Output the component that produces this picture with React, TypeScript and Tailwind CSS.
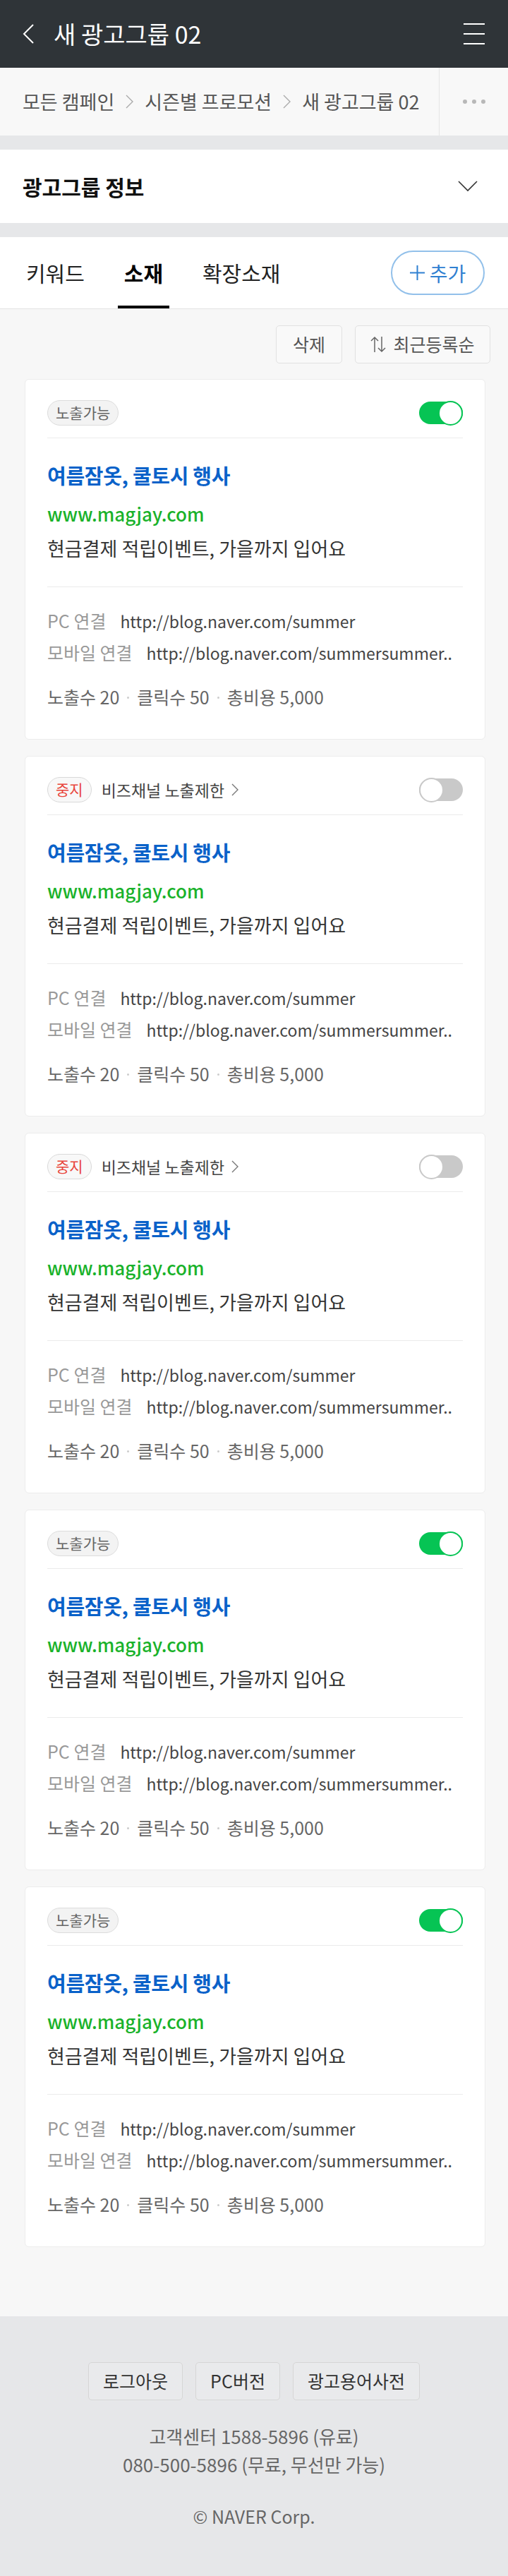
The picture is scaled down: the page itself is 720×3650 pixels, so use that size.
import React from "react";

type Ad = {
  status: "on" | "stop";
};

const ads: Ad[] = [
  { status: "on" },
  { status: "stop" },
  { status: "stop" },
  { status: "on" },
  { status: "on" },
];

function Toggle({ on }: { on: boolean }) {
  if (on) {
    return (
      <div className="flex h-[32px] w-[62px] items-center justify-end rounded-full bg-[#06c454]">
        <div className="h-[35px] w-[35px] rounded-full border-2 border-[#06c454] bg-white" />
      </div>
    );
  }
  return (
    <div className="flex h-[32px] w-[62px] items-center justify-start rounded-full bg-[#c9c9c9]">
      <div className="h-[35px] w-[35px] rounded-full border-2 border-[#c9c9c9] bg-white" />
    </div>
  );
}

function AdCard({ ad }: { ad: Ad }) {
  return (
    <div className="rounded-[6px] border border-[#ececec] bg-white px-[31px] pt-[29px] pb-[41px]">
      <div className="flex h-[36px] items-center justify-between">
        {ad.status === "on" ? (
          <span className="flex h-[36px] items-center rounded-full border border-[#dcdcdc] bg-[#f3f3f3] px-[11px] text-[21px] text-[#666]">
            노출가능
          </span>
        ) : (
          <div className="flex items-center">
            <span className="flex h-[36px] items-center rounded-full border border-[#d9d9d9] bg-[#f8f8f8] px-[11px] text-[21px] text-[#e8453c]">
              중지
            </span>
            <span className="ml-[14px] text-[23px] text-[#444]">비즈채널 노출제한</span>
            <svg width="10" height="18" viewBox="0 0 10 18" className="ml-[10px]" fill="none" stroke="#777" strokeWidth="1.4">
              <path d="M1 1l8 8-8 8" />
            </svg>
          </div>
        )}
        <Toggle on={ad.status === "on"} />
      </div>
      <div className="mt-[17px] border-t border-[#ebebeb]" />
      <div className="mt-[35px] flex h-[36px] items-center text-[29px] font-bold tracking-[-0.3px] text-[#0a62c9]">
        여름잠옷, 쿨토시 행사
      </div>
      <div className="mt-[17px] flex h-[36px] items-center text-[26px] font-medium text-[#19b22a]">
        www.magjay.com
      </div>
      <div className="mt-[14px] flex h-[36px] items-center text-[27px] text-[#333]">
        현금결제 적립이벤트, 가을까지 입어요
      </div>
      <div className="mt-[36px] border-t border-[#ebebeb]" />
      <div className="mt-[30px] flex h-[36px] items-center">
        <span className="text-[25px] text-[#999]">PC 연결</span>
        <span className="ml-[20px] text-[23px] text-[#444]">http://blog.naver.com/summer</span>
      </div>
      <div className="mt-[9px] flex h-[36px] items-center">
        <span className="shrink-0 text-[25px] text-[#999]">모바일 연결</span>
        <span className="ml-[20px] text-[23px] text-[#444]">http://blog.naver.com/summersummer..</span>
      </div>
      <div className="mt-[27px] flex h-[36px] items-center text-[25px] text-[#666]">
        <span>노출수 20</span>
        <span className="mx-[11px] h-[3px] w-[3px] rounded-full bg-[#ccc]" />
        <span>클릭수 50</span>
        <span className="mx-[11px] h-[3px] w-[3px] rounded-full bg-[#ccc]" />
        <span>총비용 5,000</span>
      </div>
    </div>
  );
}

function Crumb() {
  return (
    <svg width="11" height="20" viewBox="0 0 11 20" className="mx-[16px] shrink-0" fill="none" stroke="#aaa" strokeWidth="1.4">
      <path d="M1 1l9 9-9 9" />
    </svg>
  );
}

export default function App() {
  return (
    <div className="w-[720px] bg-[#f7f7f7] font-['Noto_Sans_CJK_KR',sans-serif]">
      {/* header */}
      <header className="flex h-[96px] items-center bg-[#2f3438] pl-[32px] pr-[33px]">
        <svg width="16" height="28" viewBox="0 0 16 28" fill="none" stroke="#fff" strokeWidth="2" className="shrink-0">
          <path d="M15 1L2 14l13 13" />
        </svg>
        <span className="ml-[28px] whitespace-nowrap text-[34px] leading-[44px] text-white">새 광고그룹 02</span>
        <div className="ml-auto flex w-[30px] flex-col gap-[12px]">
          <span className="h-[2px] bg-white" />
          <span className="h-[2px] bg-white" />
          <span className="h-[2px] bg-white" />
        </div>
      </header>

      {/* breadcrumb */}
      <nav className="flex h-[96px] items-center bg-[#f8f8f8]">
        <div className="flex flex-1 items-center whitespace-nowrap pl-[32px] text-[27px] text-[#555]">
          <span>모든 캠페인</span>
          <Crumb />
          <span>시즌별 프로모션</span>
          <Crumb />
          <span>새 광고그룹 02</span>
        </div>
        <div className="flex h-full w-[98px] shrink-0 items-center justify-center gap-[7px] border-l border-[#e5e5e5]">
          <span className="h-[6px] w-[6px] rounded-full bg-[#b8b8b8]" />
          <span className="h-[6px] w-[6px] rounded-full bg-[#b8b8b8]" />
          <span className="h-[6px] w-[6px] rounded-full bg-[#b8b8b8]" />
        </div>
      </nav>

      <div className="h-[20px] bg-[#e6e7e9]" />

      {/* ad group info */}
      <section className="flex h-[104px] items-center justify-between bg-white pl-[32px] pr-[43px]">
        <div className="text-[30px] font-bold text-[#111]">광고그룹 정보</div>
        <svg width="28" height="16" viewBox="0 0 28 16" fill="none" stroke="#333" strokeWidth="1.6">
          <path d="M1 1l13 13L27 1" />
        </svg>
      </section>

      <div className="h-[20px] bg-[#e6e7e9]" />

      {/* tabs */}
      <div className="flex h-[102px] items-stretch border-b border-[#e3e3e3] bg-white pl-[28px] pr-[33px]">
        <div className="flex gap-[38px]">
          <button className="flex items-center border-b-[4px] border-transparent px-[9px] pt-[4px] text-[30px] text-[#222]">
            키워드
          </button>
          <button className="flex items-center border-b-[4px] border-black px-[9px] pt-[4px] text-[30px] font-bold text-black">
            소재
          </button>
          <button className="flex items-center border-b-[4px] border-transparent px-[9px] pt-[4px] text-[30px] text-[#222]">
            확장소재
          </button>
        </div>
        <div className="ml-auto flex items-center">
          <button className="flex h-[63px] w-[133px] items-center justify-center gap-[7px] rounded-full border-2 border-[#92c0ea] text-[28px] text-[#2f80d1]">
            <svg width="21" height="21" viewBox="0 0 21 21" fill="none" stroke="#2f80d1" strokeWidth="2">
              <path d="M10.5 0v21M0 10.5h21" />
            </svg>
            추가
          </button>
        </div>
      </div>

      {/* list */}
      <main className="pt-[23px] pb-[98px]">
        <div className="flex justify-end gap-[18px] pr-[25px]">
          <button className="flex h-[54px] w-[94px] items-center justify-center rounded-[5px] border border-[#e1e1e1] bg-[#f9f9f9] text-[25px] text-[#555]">
            삭제
          </button>
          <button className="flex h-[54px] w-[192px] items-center justify-center gap-[10px] rounded-[5px] border border-[#e1e1e1] bg-[#f9f9f9] text-[25px] text-[#555]">
            <svg width="22" height="24" viewBox="0 0 22 24" fill="none" stroke="#666" strokeWidth="1.5">
              <path d="M6 23V2M1 7l5-5 5 5M16 1v21M11 17l5 5 5-5" />
            </svg>
            최근등록순
          </button>
        </div>
        <div className="mt-[22px] flex flex-col gap-[23px] pl-[35px] pr-[32px]">
          {ads.map((ad, i) => (
            <AdCard key={i} ad={ad} />
          ))}
        </div>
      </main>

      {/* footer */}
      <footer className="flex flex-col items-center bg-[#e6e7e9] pt-[65px] pb-[65px] text-[#666]">
        <div className="flex gap-[18px]">
          <button className="flex h-[54px] items-center rounded-[5px] border border-[#d6d6d6] bg-[#e9eaec] px-[20px] text-[25px] text-[#333]">
            로그아웃
          </button>
          <button className="flex h-[54px] items-center rounded-[5px] border border-[#d6d6d6] bg-[#e9eaec] px-[20px] text-[25px] text-[#333]">
            PC버전
          </button>
          <button className="flex h-[54px] items-center rounded-[5px] border border-[#d6d6d6] bg-[#e9eaec] px-[20px] text-[25px] text-[#333]">
            광고용어사전
          </button>
        </div>
        <p className="mt-[31px] text-[26px] leading-[40px]">고객센터 1588-5896 (유료)</p>
        <p className="text-[26px] leading-[40px]">080-500-5896 (무료, 무선만 가능)</p>
        <p className="mt-[33px] text-[25px] leading-[40px]">© NAVER Corp.</p>
      </footer>
    </div>
  );
}
